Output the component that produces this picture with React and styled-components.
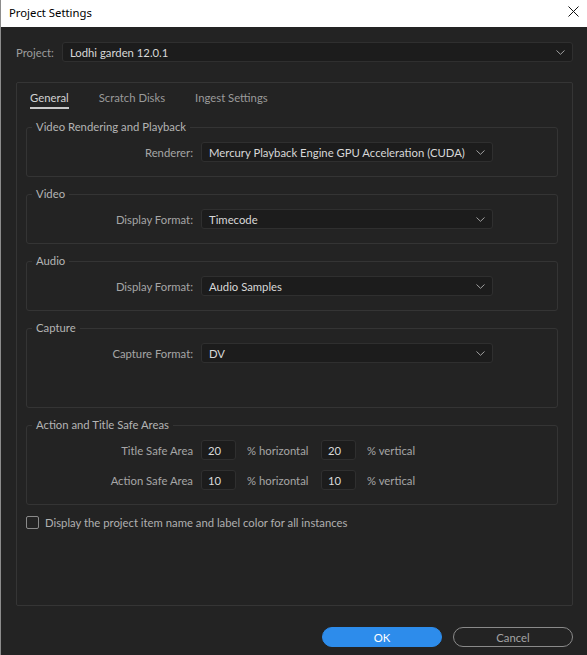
import React from 'react';
import styled, { createGlobalStyle } from 'styled-components';

const Global = createGlobalStyle`
  html, body { margin: 0; padding: 0; background: #232323; }
  * { box-sizing: border-box; }
`;

const Window = styled.div`
  width: 587px;
  height: 655px;
  display: flex;
  flex-direction: column;
  background: #232323;
  border-left: 1px solid #8c8c8c;
  font-family: Lato, "Open Sans", sans-serif;
  font-size: 11.3px;
  color: #a8a8a8;
`;

const TitleBar = styled.div`
  height: 27px;
  flex: none;
  display: flex;
  align-items: center;
  justify-content: space-between;
  padding: 0 8px 3px 8px;
  background: #fff;
  color: #000;
  font-family: "Noto Sans", "Open Sans", sans-serif;
  font-size: 11.3px;
`;

const CloseBtn = styled.svg`
  width: 11px;
  height: 11px;
  margin-top: -2px;
`;

const Body = styled.div`
  flex: 1;
  display: flex;
  flex-direction: column;
  padding: 15px 14px 8px 15px;
`;

const ProjectRow = styled.div`
  display: flex;
  align-items: center;
  gap: 8px;
  margin-bottom: 20px;
`;

const Label = styled.span`
  color: #9c9c9c;
  white-space: nowrap;
`;

const SelectBox = styled.div`
  flex: ${({ grow }) => (grow ? 1 : 'none')};
  width: ${({ w }) => (w ? `${w}px` : 'auto')};
  height: 20px;
  display: flex;
  align-items: center;
  justify-content: space-between;
  padding: 0 7px 0 7px;
  background: #1c1c1c;
  border: 1px solid #2f2f2f;
  border-radius: 3px;
  color: #d8d8d8;
  white-space: nowrap;
`;

const Chevron = styled.svg`
  width: 9px;
  height: 5px;
  flex: none;
`;

const Panel = styled.div`
  flex: 1;
  display: flex;
  flex-direction: column;
  border: 1px solid #353535;
  border-radius: 2px;
  padding: 8px 14px 0 9px;
`;

const Tabs = styled.div`
  display: flex;
  gap: 30px;
  padding-left: 4px;
  margin-bottom: 11px;
`;

const Tab = styled.div`
  line-height: 14px;
  padding-bottom: 2px;
  border-bottom: 2px solid ${({ active }) => (active ? '#c9c9c9' : 'transparent')};
  color: ${({ active }) => (active ? '#d2d2d2' : '#9a9a9a')};
`;

const Group = styled.fieldset`
  margin: 0 0 10px 0;
  padding: 8px 0 ${({ tall }) => (tall ? 44 : 14)}px 0;
  min-width: 0;
  border: 1px solid #343434;
  border-radius: 3px;
  display: flex;
  flex-direction: column;
  gap: 10px;
`;

const Legend = styled.legend`
  margin-left: 5px;
  padding: 0 4px;
  line-height: 14px;
  color: #b4b4b4;
`;

const Row = styled.div`
  display: grid;
  grid-template-columns: 166px auto;
  column-gap: 8px;
  align-items: center;
`;

const RowLabel = styled.span`
  text-align: right;
  color: #a6a6a6;
  white-space: nowrap;
`;

const SafeFields = styled.div`
  display: flex;
  align-items: center;
`;

const NumInput = styled.div`
  width: 35px;
  height: 20px;
  display: flex;
  align-items: center;
  padding-left: 6px;
  background: #1c1c1c;
  border: 1px solid #2f2f2f;
  border-radius: 3px;
  color: #dadada;
`;

const Unit = styled.span`
  color: #a6a6a6;
  margin-left: 11px;
  width: ${({ w }) => (w ? `${w}px` : 'auto')};
  white-space: nowrap;
`;

const CheckRow = styled.label`
  display: flex;
  align-items: center;
  gap: 6px;
  margin-top: 1px;
  color: #b0b0b0;
  white-space: nowrap;
`;

const Box = styled.span`
  width: 13px;
  height: 13px;
  flex: none;
  border: 1.5px solid #8a8a8a;
  border-radius: 2px;
`;

const Footer = styled.div`
  display: flex;
  justify-content: flex-end;
  gap: 11px;
  margin-top: 21px;
`;

const Button = styled.div`
  width: 120px;
  height: 20px;
  display: flex;
  align-items: center;
  justify-content: center;
  border-radius: 10px;
  background: ${({ primary }) => (primary ? '#2d8ceb' : 'transparent')};
  border: 1px solid ${({ primary }) => (primary ? '#2d8ceb' : '#8a8a8a')};
  color: ${({ primary }) => (primary ? '#fff' : '#a3a3a3')};
`;

function Select({ value, w, grow }) {
  return (
    <SelectBox w={w} grow={grow}>
      <span>{value}</span>
      <Chevron viewBox="0 0 9 5">
        <polyline points="0.5,0.5 4.5,4.3 8.5,0.5" fill="none" stroke="#a0a0a0" strokeWidth="1" />
      </Chevron>
    </SelectBox>
  );
}

function SelectGroup({ title, label, value, tall }) {
  return (
    <Group tall={tall}>
      <Legend>{title}</Legend>
      <Row>
        <RowLabel>{label}</RowLabel>
        <Select value={value} w={292} />
      </Row>
    </Group>
  );
}

function SafeRow({ label, h, v }) {
  return (
    <Row>
      <RowLabel>{label}</RowLabel>
      <SafeFields>
        <NumInput>{h}</NumInput>
        <Unit w={74}>% horizontal</Unit>
        <NumInput>{v}</NumInput>
        <Unit>% vertical</Unit>
      </SafeFields>
    </Row>
  );
}

export default function App() {
  return (
    <>
      <Global />
      <Window>
        <TitleBar>
          <span>Project Settings</span>
          <CloseBtn viewBox="0 0 11 11">
            <path d="M0.5 0.5 L10.5 10.5 M10.5 0.5 L0.5 10.5" stroke="#111" strokeWidth="1" />
          </CloseBtn>
        </TitleBar>
        <Body>
          <ProjectRow>
            <Label>Project:</Label>
            <Select value="Lodhi garden 12.0.1" grow />
          </ProjectRow>
          <Panel>
            <Tabs>
              <Tab active>General</Tab>
              <Tab>Scratch Disks</Tab>
              <Tab>Ingest Settings</Tab>
            </Tabs>
            <SelectGroup
              title="Video Rendering and Playback"
              label="Renderer:"
              value="Mercury Playback Engine GPU Acceleration (CUDA)"
            />
            <SelectGroup title="Video" label="Display Format:" value="Timecode" />
            <SelectGroup title="Audio" label="Display Format:" value="Audio Samples" />
            <SelectGroup title="Capture" label="Capture Format:" value="DV" tall />
            <Group>
              <Legend>Action and Title Safe Areas</Legend>
              <SafeRow label="Title Safe Area" h="20" v="20" />
              <SafeRow label="Action Safe Area" h="10" v="10" />
            </Group>
            <CheckRow>
              <Box />
              Display the project item name and label color for all instances
            </CheckRow>
          </Panel>
          <Footer>
            <Button primary>OK</Button>
            <Button>Cancel</Button>
          </Footer>
        </Body>
      </Window>
    </>
  );
}
